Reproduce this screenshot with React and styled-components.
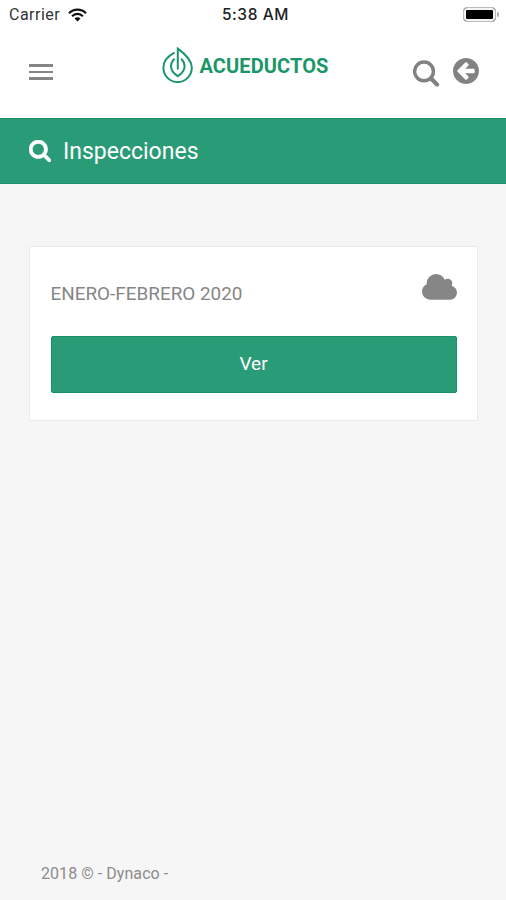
import React from "react";
import styled, { createGlobalStyle } from "styled-components";

const GlobalStyle = createGlobalStyle`
  * {
    box-sizing: border-box;
  }

  body {
    margin: 0;
    background: #f6f6f6;
    font-family: Roboto, sans-serif;
  }
`;

const SearchIcon = () => (
  <svg width="22" height="22" viewBox="64 128 1664 1664" fill="currentColor" stroke="currentColor" strokeWidth="40">
    <path d="M1216 832q0-185-131.5-316.5t-316.5-131.5-316.5 131.5-131.5 316.5 131.5 316.5 316.5 131.5 316.5-131.5 131.5-316.5zm512 832q0 52-38 90t-90 38q-54 0-90-38l-343-342q-179 124-399 124-143 0-273.5-55.5t-225-150-150-225-55.5-273.5 55.5-273.5 150-225 225-150 273.5-55.5 273.5 55.5 225 150 150 225 55.5 273.5q0 220-124 399l343 343q37 37 37 90z" />
  </svg>
);

const ThinSearchIcon = () => (
  <svg width="27" height="27" viewBox="0 0 27 27" fill="none" stroke="currentColor">
    <circle cx="11" cy="11.4" r="9.4" strokeWidth="3.4" />
    <path d="M18 18.6L24 24.6" strokeWidth="4.2" strokeLinecap="round" />
  </svg>
);

const BackIcon = () => (
  <svg width="26" height="26" viewBox="128 128 1536 1536" fill="currentColor">
    <path d="M1408 960v-128q0-26-19-45t-45-19h-502l189-189q19-19 19-45t-19-45l-91-91q-18-18-45-18t-45 18l-362 362-91 91q-18 18-18 45t18 45l91 91 362 362q18 18 45 18t45-18l91-91q18-18 18-45t-18-45l-189-189h502q26 0 45-19t19-45zm256-64q0 209-103 385.5t-279.5 279.5-385.5 103-385.5-103-279.5-279.5-103-385.5 103-385.5 279.5-279.5 385.5-103 385.5 103 279.5 279.5 103 385.5z" />
  </svg>
);

const CloudIcon = () => (
  <svg width="35" height="25.7" viewBox="64 128 1920 1408" fill="currentColor">
    <path d="M1984 1152q0 159-112.5 271.5t-271.5 112.5h-1088q-185 0-316.5-131.5t-131.5-316.5q0-132 71-241.5t187-163.5q-2-28-2-43 0-212 150-362t362-150q158 0 286.5 88t187.5 230q70-62 166-62 106 0 181 75t75 181q0 75-41 138 129 30 213 134.5t84 239.5z" />
  </svg>
);

const WifiIcon = () => (
  <svg width="19" height="14" viewBox="0 0 19 14" fill="none" stroke="#111">
    <path d="M1 5.2C5.8.4 13.2.4 18 5.2" strokeWidth="2.3" />
    <path d="M4.1 8.2C7.1 5.2 11.9 5.2 14.9 8.2" strokeWidth="2.2" />
    <path d="M9.5 13.4L6.5 10.4C8.2 8.8 10.8 8.8 12.5 10.4Z" fill="#111" stroke="none" />
  </svg>
);

// Drop with a leaf inside, both hanging from the same stem
const LogoMark = () => (
  <svg width="32" height="38" viewBox="0 0 32 38" fill="none" stroke="currentColor">
    <path
      d="M12.6 6.6C6.2 9.8 1.4 15.2 1.4 21.8A14.2 14.2 0 0 0 29.8 21.8C29.8 14.4 23.6 8.2 15.8 2.6V23.6"
      strokeWidth="2"
    />
    <path
      d="M12.5 12.6C10 15.2 9 17.6 9 20.2C9 24.3 11.6 27.4 15.8 30.2C20 27.4 22.6 24.3 22.6 20.2C22.6 17.6 21.5 15.2 19.2 12.8"
      strokeWidth="2"
    />
  </svg>
);

const App = () => {
  return (
    <Page>
      <GlobalStyle />

      <StatusBar>
        <Carrier>
          Carrier
          <WifiIcon />
        </Carrier>
        <Clock>5:38 AM</Clock>
        <BatteryWrapper>
          <Battery />
          <BatteryTip />
        </BatteryWrapper>
      </StatusBar>

      <Header>
        <MenuButton aria-label="Menu">
          <MenuLine />
          <MenuLine />
          <MenuLine />
        </MenuButton>
        <Logo>
          <LogoMark />
          <LogoText>ACUEDUCTOS</LogoText>
        </Logo>
        <Actions>
          <IconButton aria-label="Buscar">
            <ThinSearchIcon />
          </IconButton>
          <IconButton aria-label="Volver" $raised>
            <BackIcon />
          </IconButton>
        </Actions>
      </Header>

      <TitleBar>
        <SearchIcon />
        <Title>Inspecciones</Title>
      </TitleBar>

      <Content>
        <Card>
          <CardHeader>
            <CardTitle>ENERO-FEBRERO 2020</CardTitle>
            <CloudIcon />
          </CardHeader>
          <ViewButton>Ver</ViewButton>
        </Card>
      </Content>

      <Footer>2018 © - Dynaco -</Footer>
    </Page>
  );
};

const Page = styled.div`
  display: flex;
  flex-direction: column;
  height: 900px;
  overflow: hidden;
  background: #f6f6f6;
`;

const StatusBar = styled.div`
  display: grid;
  grid-template-columns: 1fr auto 1fr;
  align-items: center;
  height: 29px;
  padding: 0 7px 0 9px;
  background: #fff;
`;

const Carrier = styled.div`
  display: flex;
  align-items: center;
  gap: 8px;
  color: #333;
  font-size: 16px;
  line-height: 20px;
  letter-spacing: 0.5px;
`;

const Clock = styled.div`
  margin-left: 3px;
  color: #222;
  font-family: Inter, sans-serif;
  font-size: 15.5px;
  font-weight: 500;
  line-height: 20px;
  letter-spacing: 0.6px;
`;

const BatteryWrapper = styled.div`
  display: flex;
  align-items: center;
  justify-content: flex-end;
  gap: 1px;
`;

const Battery = styled.div`
  width: 33px;
  height: 15px;
  border: 1px solid #bbb;
  border-radius: 4px;
  background: #000;
  box-shadow: inset 0 0 0 2px #f4f4f4;
`;

const BatteryTip = styled.div`
  width: 2px;
  height: 5px;
  border-radius: 0 2px 2px 0;
  background: #aaa;
`;

const Header = styled.header`
  display: grid;
  grid-template-columns: 1fr auto 1fr;
  align-items: start;
  height: 89px;
  padding: 17px 27px 0 29px;
  background: #fff;
`;

const MenuButton = styled.button`
  display: flex;
  flex-direction: column;
  gap: 4px;
  width: 24px;
  margin-top: 18px;
  padding: 0;
  border: none;
  background: none;
`;

const MenuLine = styled.span`
  height: 2.6px;
  background: #868686;
`;

const Logo = styled.div`
  display: flex;
  align-items: center;
  gap: 6px;
  margin-right: 18px;
  color: #1b9669;
`;

const LogoText = styled.span`
  width: 129px;
  padding-top: 2px;
  font-size: 20px;
  font-weight: 700;
  line-height: 36px;
  letter-spacing: 0.1px;
  white-space: nowrap;
`;

const Actions = styled.div`
  display: flex;
  align-items: flex-start;
  justify-content: flex-end;
  gap: 13px;
  margin-top: 14px;
`;

const IconButton = styled.button`
  display: flex;
  margin-top: ${(props) => (props.$raised ? "-2px" : "0")};
  padding: 0;
  border: none;
  background: none;
  color: #828282;
`;

const TitleBar = styled.div`
  display: flex;
  align-items: center;
  gap: 12.5px;
  height: 65.5px;
  padding-left: 28.5px;
  border-top: 1px solid #1b9268;
  border-bottom: 1px solid #1b9268;
  background: #299b76;
  color: #fff;
`;

const Title = styled.h1`
  margin: 0;
  padding-top: 2px;
  font-size: 23px;
  font-weight: 400;
  line-height: 30px;
`;

const Content = styled.main`
  flex: 1;
  padding: 62px 28px 0 29px;
`;

const Card = styled.section`
  height: 175.5px;
  padding: 27.5px 20.5px 0;
  border: 1px solid #eaeaea;
  background: #fff;
`;

const CardHeader = styled.div`
  display: flex;
  align-items: flex-start;
  justify-content: space-between;
  height: 62px;
  color: #868686;
`;

const CardTitle = styled.h2`
  margin: 7.5px 0 0;
  font-size: 18.9px;
  font-weight: 400;
  line-height: 24px;
`;

const ViewButton = styled.button`
  display: block;
  width: 100%;
  height: 56.5px;
  padding: 0 0 2px;
  border: 1px solid #169263;
  border-radius: 2px;
  background: #299b76;
  color: #fff;
  font-family: inherit;
  font-size: 19px;
`;

const Footer = styled.footer`
  padding: 0 41px 16px;
  color: #8c8c8c;
  font-size: 16px;
  line-height: 20px;
  letter-spacing: 0.05px;
`;

export default App;
